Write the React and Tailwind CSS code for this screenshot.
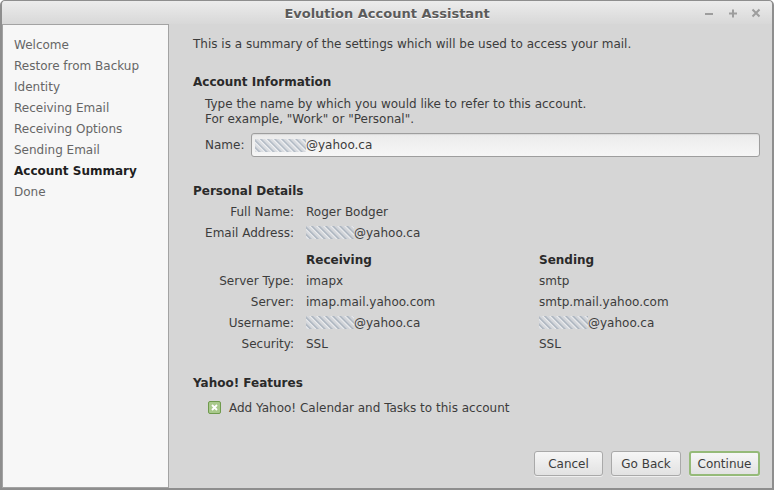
import React from 'react';

const steps = [
  'Welcome',
  'Restore from Backup',
  'Identity',
  'Receiving Email',
  'Receiving Options',
  'Sending Email',
  'Account Summary',
  'Done',
];

const Hidden = ({ w = 'w-[50px]' }) => (
  <span className={`inline-block ${w} h-[13px] align-[-2px] bg-[repeating-linear-gradient(45deg,#c9ccd2_0px,#eef0f3_2px,#9aa6b4_3px,#d8dbe0_5px)] opacity-80`} />
);

const Row = ({ label, children, children2 }) => (
  <>
    <div className="text-right pr-[12px] h-[21px] leading-[21px]">{label}</div>
    <div className="h-[21px] leading-[21px] whitespace-nowrap">{children}</div>
    <div className="h-[21px] leading-[21px] whitespace-nowrap">{children2}</div>
  </>
);

const Button = ({ children, primary, w }) => (
  <button
    className={`${w} h-[25px] rounded-[3px] text-[12px] text-[#3c3c3c] bg-linear-to-b from-[#f6f6f6] to-[#e2e2e2] shadow-[0_1px_0_rgba(255,255,255,0.6)] ${
      primary ? 'border-2 border-[#95ba78]' : 'border border-[#a9a9a9]'
    }`}
  >
    {children}
  </button>
);

export default function App() {
  return (
    <div className="w-[774px] h-[490px] flex flex-col bg-[#d6d6d6] border-x-2 border-b-2 border-t border-[#8e8e8e] rounded-t-[5px] overflow-hidden font-['DejaVu_Sans',sans-serif] text-[12px] text-[#3c3c3c]">
      {/* title bar */}
      <div className="relative h-[23px] flex items-center justify-center bg-linear-to-b from-[#ececec] to-[#d8d8d8]">
        <span className="text-[13px] font-bold text-[#5b5b5b] [text-shadow:0_1px_0_#ffffff] pt-[2px]">
          Evolution Account Assistant
        </span>
        <div className="absolute right-[11px] top-[7px] flex items-center">
          <svg width="10" height="10" viewBox="0 0 10 10">
            <path d="M1 6h8" stroke="#9d9d9d" strokeWidth="2" />
          </svg>
          <svg width="10" height="10" viewBox="0 0 10 10" className="ml-[14px]">
            <path d="M1 5.5h8M5 1.5v8" stroke="#9d9d9d" strokeWidth="2" />
          </svg>
          <svg width="10" height="10" viewBox="0 0 10 10" className="ml-[13px]">
            <path d="M1.5 1.5l7 7M8.5 1.5l-7 7" stroke="#9d9d9d" strokeWidth="2" />
          </svg>
        </div>
      </div>

      <div className="flex flex-1 min-h-0">
        {/* sidebar */}
        <div className="w-[167px] bg-[#f7f7f7] border border-[#a3a3a3] pt-[10px] px-[11px]">
          {steps.map((s) => (
            <div
              key={s}
              className={`h-[21px] leading-[21px] ${
                s === 'Account Summary' ? 'font-bold text-[#1e1e1e]' : 'text-[#666666]'
              }`}
            >
              {s}
            </div>
          ))}
        </div>

        {/* main */}
        <div className="flex-1 flex flex-col pl-[24px] pr-[12px] pt-[10px] pb-[12px]">
          <div className="h-[21px] leading-[21px]">
            This is a summary of the settings which will be used to access your mail.
          </div>

          <div className="mt-[17px] h-[21px] leading-[21px] font-bold text-[#2a2a2a]">Account Information</div>
          <div className="ml-[12px] mt-[4px] leading-[15px]">
            <div>Type the name by which you would like to refer to this account.</div>
            <div>For example, "Work" or "Personal".</div>
          </div>
          <div className="ml-[12px] mt-[6px] flex items-center">
            <span className="w-[46px]">Name:</span>
            <div className="flex-1 h-[24px] flex items-center px-[3px] rounded-[3px] border border-[#9e9e9e] bg-linear-to-b from-[#ebebeb] to-[#f6f6f6] shadow-[inset_0_1px_1px_rgba(0,0,0,0.08)]">
              <Hidden w="w-[51px]" />
              <span>@yahoo.ca</span>
            </div>
          </div>

          <div className="mt-[24px] h-[21px] leading-[21px] font-bold text-[#2a2a2a]">Personal Details</div>
          <div className="ml-[12px] grid grid-cols-[101px_233px_1fr]">
            <Row label="Full Name:">Roger Bodger</Row>
            <Row label="Email Address:">
              <Hidden w="w-[48px]" />
              @yahoo.ca
            </Row>
          </div>
          <div className="ml-[12px] mt-[6px] grid grid-cols-[101px_233px_1fr]">
            <div />
            <div className="h-[21px] leading-[21px] font-bold text-[#2a2a2a]">Receiving</div>
            <div className="h-[21px] leading-[21px] font-bold text-[#2a2a2a]">Sending</div>
            <Row label="Server Type:" children2="smtp">imapx</Row>
            <Row label="Server:" children2="smtp.mail.yahoo.com">imap.mail.yahoo.com</Row>
            <Row
              label="Username:"
              children2={
                <>
                  <Hidden w="w-[49px]" />
                  @yahoo.ca
                </>
              }
            >
              <Hidden w="w-[48px]" />
              @yahoo.ca
            </Row>
            <Row label="Security:" children2="SSL">SSL</Row>
          </div>

          <div className="mt-[18px] h-[21px] leading-[21px] font-bold text-[#2a2a2a]">Yahoo! Features</div>
          <div className="ml-[15px] mt-[3px] h-[21px] flex items-center gap-[8px]">
            <span className="w-[13px] h-[13px] rounded-[2px] border border-[#6f9a4d] bg-[#a9c98c] flex items-center justify-center">
              <svg width="9" height="9" viewBox="0 0 9 9">
                <path d="M2 2l5 5M7 2l-5 5" stroke="#ffffff" strokeWidth="1.8" />
              </svg>
            </span>
            <span>Add Yahoo! Calendar and Tasks to this account</span>
          </div>

          <div className="mt-auto flex justify-end gap-[8px]">
            <Button w="w-[69px]">Cancel</Button>
            <Button w="w-[70px]">Go Back</Button>
            <Button w="w-[71px]" primary>
              Continue
            </Button>
          </div>
        </div>
      </div>
    </div>
  );
}
